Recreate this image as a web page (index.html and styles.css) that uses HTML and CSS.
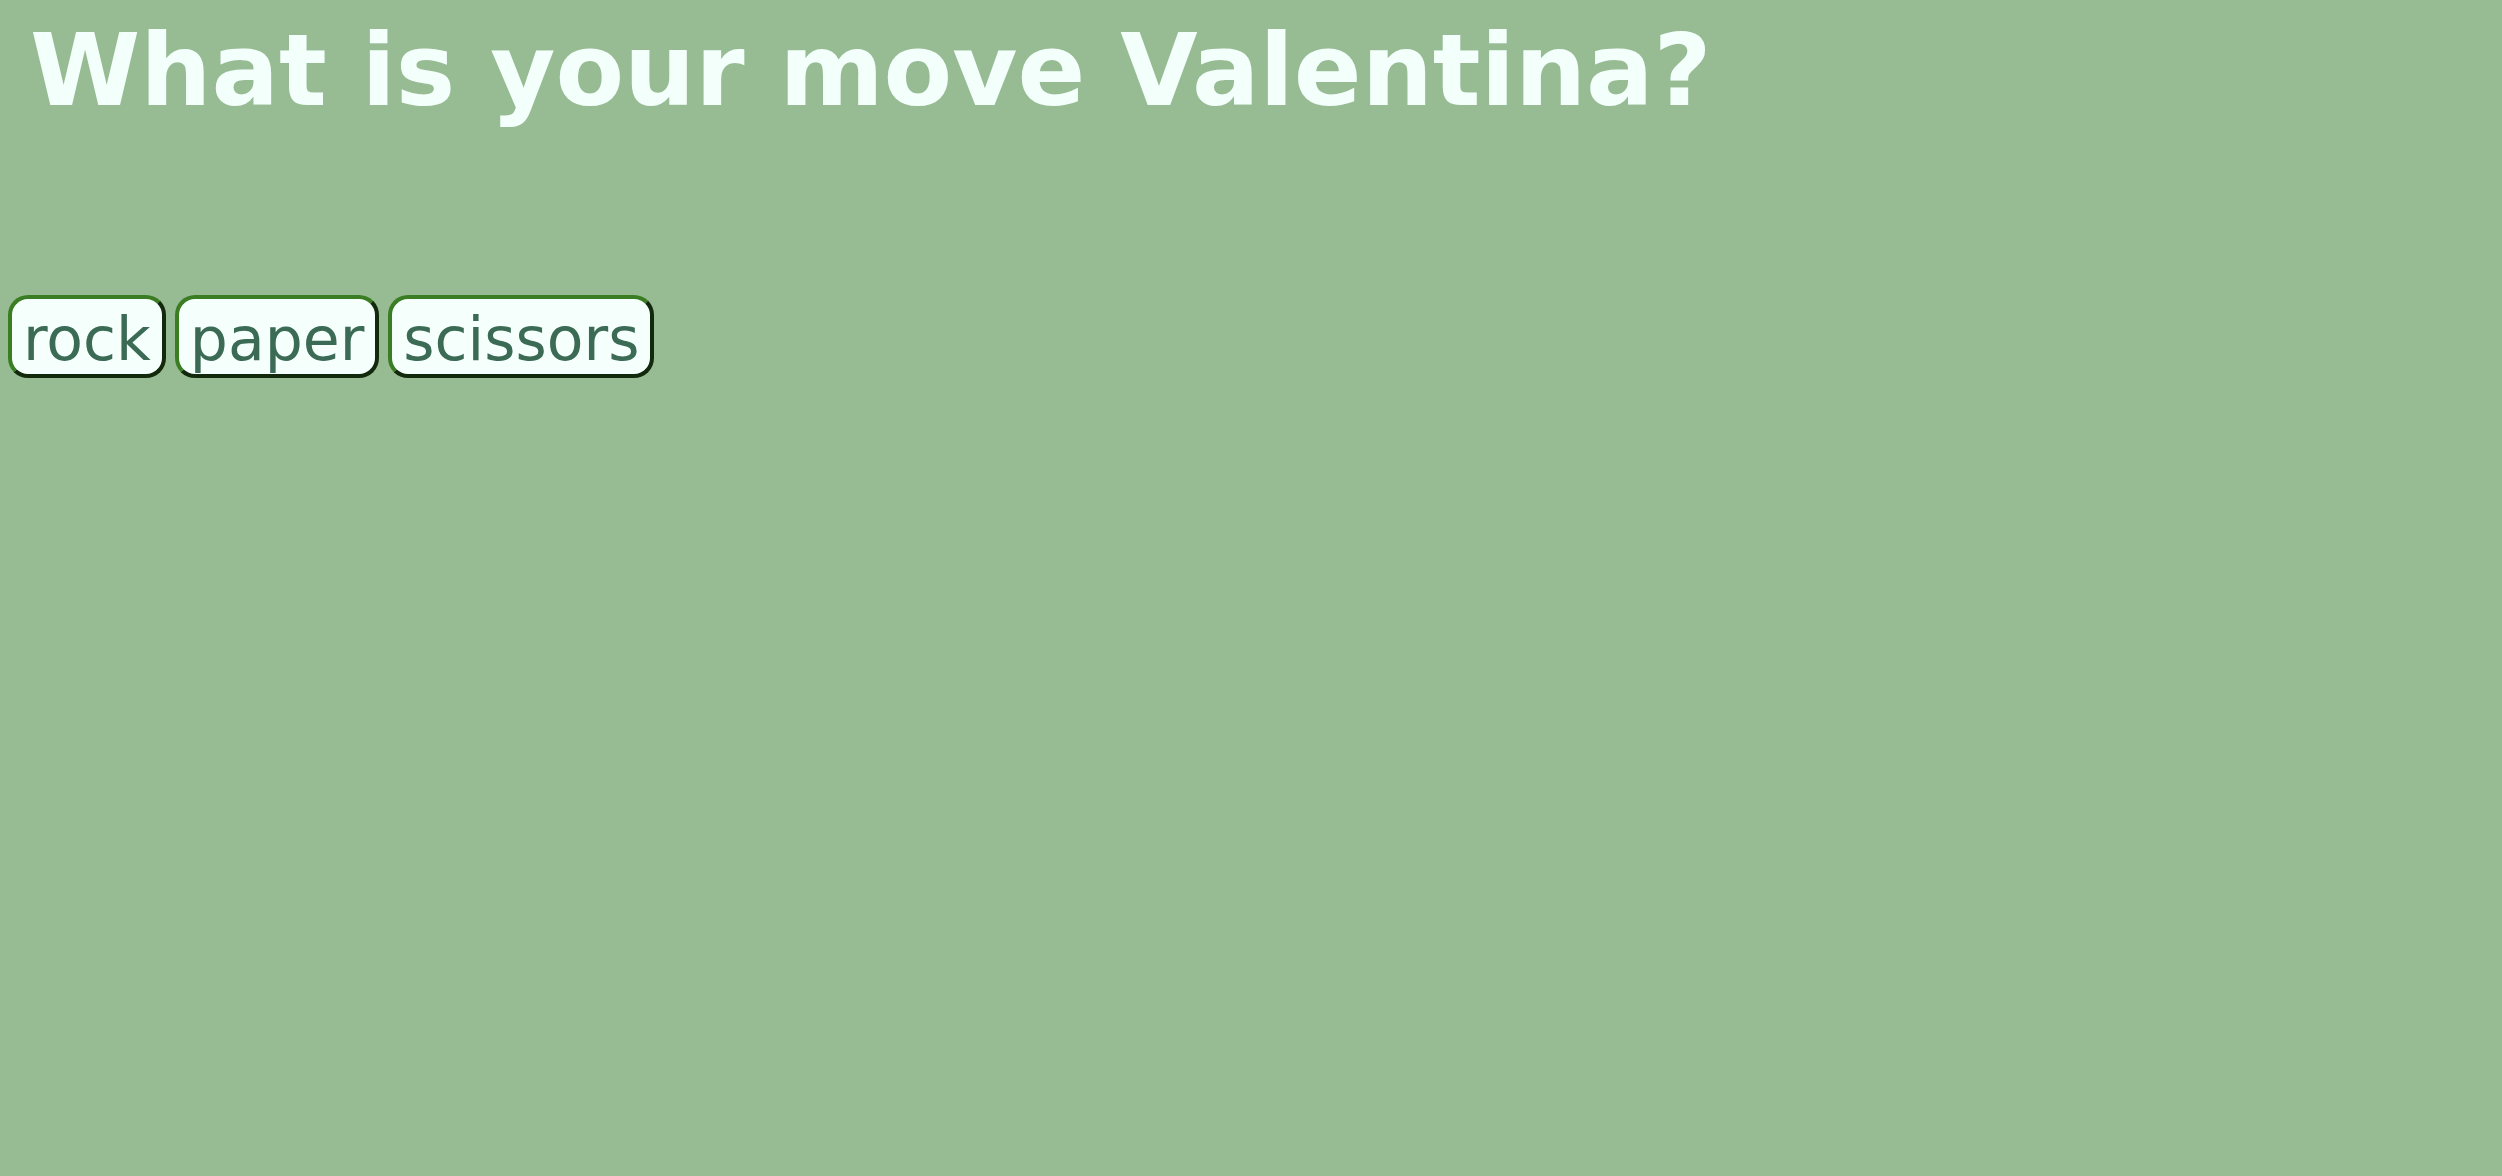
FILE: index.html
```html
<!DOCTYPE html>
<html>
<head>
<meta charset="utf-8">
<link rel="stylesheet" href="styles.css">
</head>
<body>
<h1 class="title">What is your move Valentina?</h1>
<div class="moves">
  <button class="move">rock</button>
  <button class="move">paper</button>
  <button class="move">scissors</button>
</div>
</body>
</html>
```
FILE: styles.css
```css
html, body {
  margin: 0;
  padding: 0;
  background: #97bb93;
  height: 100%;
}
body {
  font-family: "DejaVu Sans", sans-serif;
}
.title {
  margin: 12px 0 0 30px;
  font-size: 100px;
  font-weight: bold;
  line-height: normal;
  color: #f3fffb;
}
.moves {
  display: flex;
  align-items: flex-start;
  gap: 9px;
  margin: 166px 0 0 8px;
}
.move {
  font-family: "DejaVu Sans", sans-serif;
  font-size: 60px;
  line-height: normal;
  color: #3b6a55;
  background: #f5fffc;
  border: 4px outset #3b7d23;
  border-radius: 20px;
  padding: 5px 11px 0;
  margin: 0;
}
```
